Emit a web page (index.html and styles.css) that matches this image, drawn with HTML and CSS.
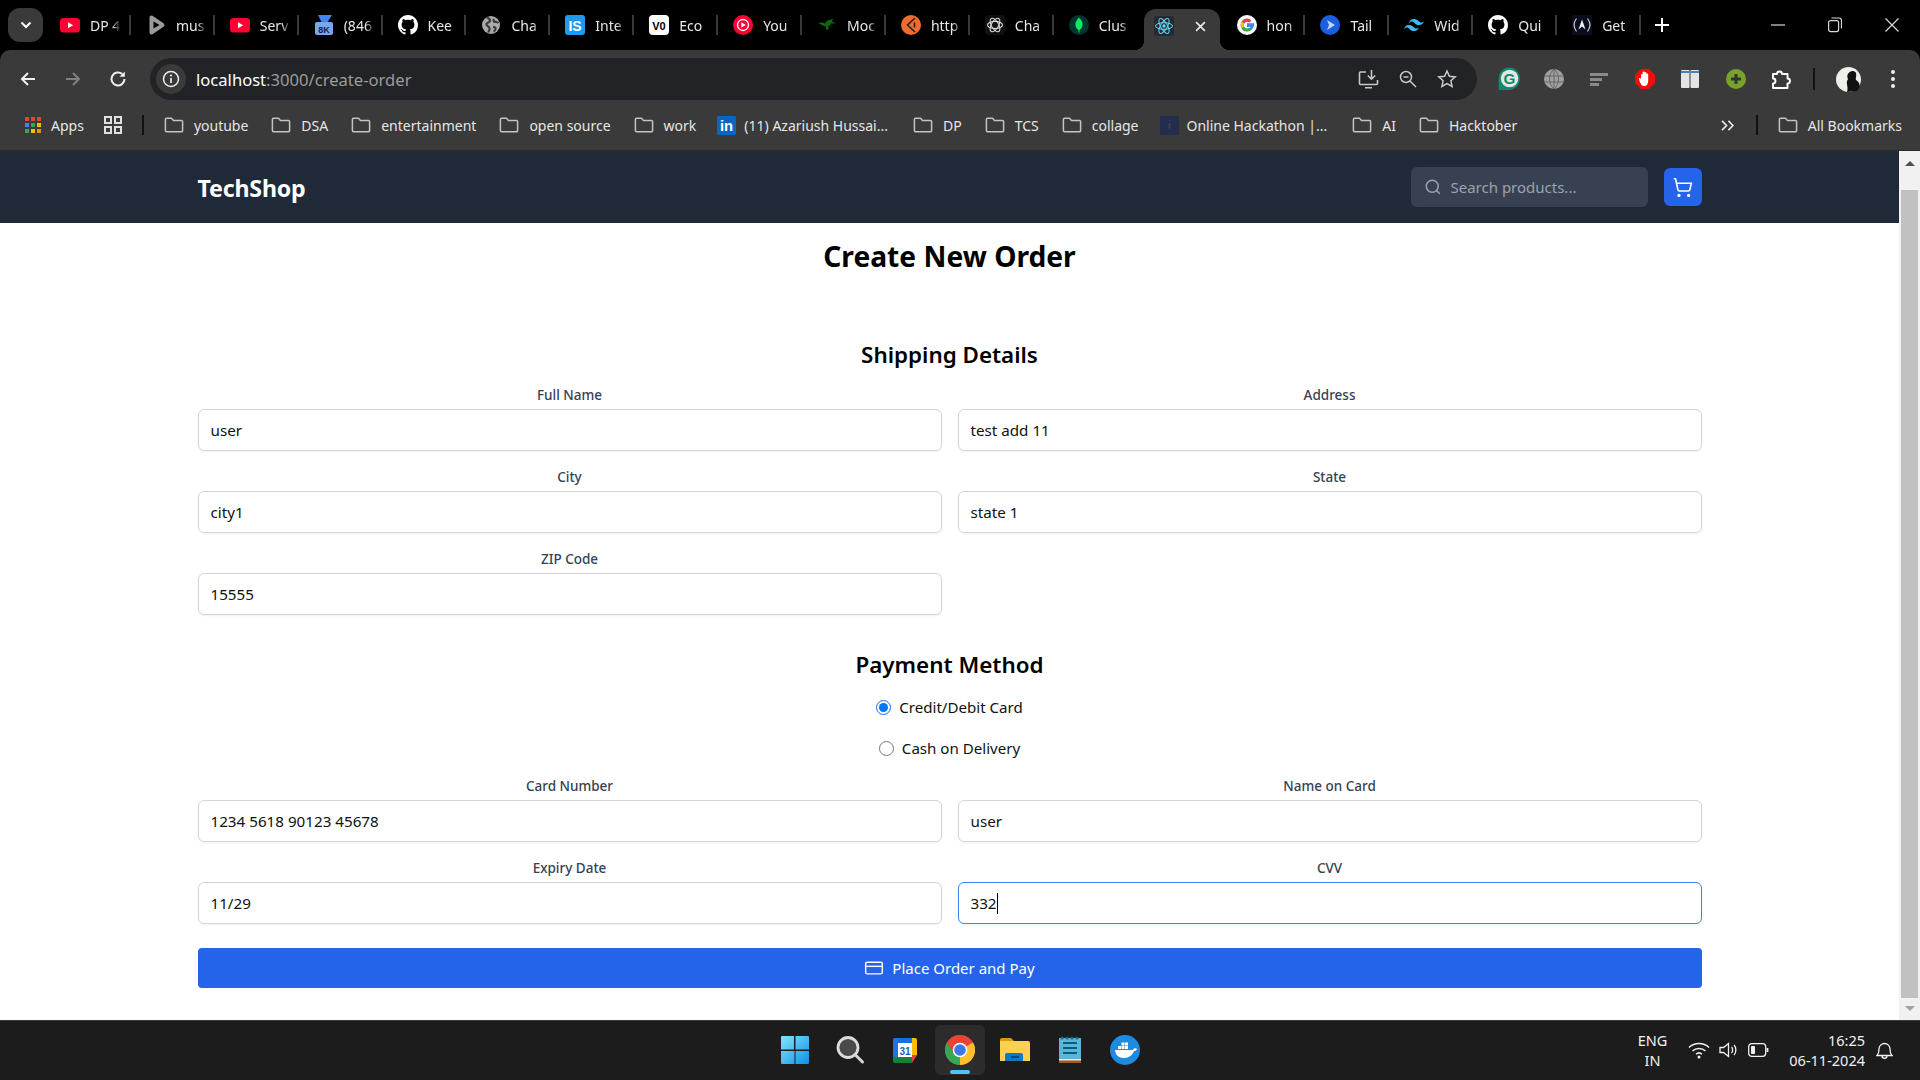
FILE: index.html
```html
<!DOCTYPE html>
<html lang="en">
<head>
<meta charset="utf-8">
<title>TechShop - Create Order</title>
<link rel="stylesheet" href="styles.css">
</head>
<body>
<svg class="defs" aria-hidden="true">
  <symbol id="folder" viewBox="0 0 20 20"><path d="M2.6 3.2h4.9l2 2.2h7.9a1.2 1.2 0 0 1 1.2 1.2v9a1.2 1.2 0 0 1-1.2 1.2H2.6a1.2 1.2 0 0 1-1.2-1.2V4.4a1.2 1.2 0 0 1 1.2-1.2z" fill="none" stroke="#c4c4c4" stroke-width="1.5"/></symbol>
  <symbol id="gh" viewBox="0 0 16 16"><path fill="#fff" d="M8 0C3.58 0 0 3.58 0 8c0 3.54 2.29 6.53 5.47 7.59.4.07.55-.17.55-.38 0-.19-.01-.82-.01-1.49-2.01.37-2.53-.49-2.69-.94-.09-.23-.48-.94-.82-1.13-.28-.15-.68-.52-.01-.53.63-.01 1.08.58 1.23.82.72 1.21 1.87.87 2.33.66.07-.52.28-.87.51-1.07-1.78-.2-3.64-.89-3.64-3.95 0-.87.31-1.59.82-2.15-.08-.2-.36-1.02.08-2.12 0 0 .67-.21 2.2.82.64-.18 1.32-.27 2-.27.68 0 1.36.09 2 .27 1.53-1.04 2.2-.82 2.2-.82.44 1.1.16 1.92.08 2.12.51.56.82 1.27.82 2.15 0 3.07-1.87 3.75-3.65 3.95.29.25.54.73.54 1.48 0 1.07-.01 1.93-.01 2.2 0 .21.15.46.55.38A8.013 8.013 0 0 0 16 8c0-4.42-3.58-8-8-8z"/></symbol>
  <symbol id="yt" viewBox="0 0 20 20"><rect y="3" width="20" height="14.5" rx="3.5" fill="#ff0033"/><path d="M8 7.2l5.2 3-5.2 3z" fill="#fff"/></symbol>
  <symbol id="globe" viewBox="0 0 20 20"><circle cx="10" cy="10" r="9" fill="#a9a9a9"/><path d="M6 2.5c2 1 3.5 1.5 3 3.5s-3 1-3.5 3 2.5 2 3 4-1 3-1 4.500M13 4c-1 2 0 3 2 3s2.500 1 2.500 1M12 12c1 0 3 0 2.500 2s-2 2.500-2 2.500" fill="none" stroke="#3a3a3a" stroke-width="2.200"/></symbol>
  <symbol id="chatgpt" viewBox="0 0 20 20"><rect width="20" height="20" rx="4" fill="#111"/><g fill="none" stroke="#d8d8d8" stroke-width="1.100"><ellipse cx="10" cy="10" rx="7.500" ry="3.600"/><ellipse cx="10" cy="10" rx="7.500" ry="3.600" transform="rotate(60 10 10)"/><ellipse cx="10" cy="10" rx="7.500" ry="3.600" transform="rotate(120 10 10)"/></g></symbol>
</svg>

<div class="tabstrip">
  <button class="expand" type="button" aria-label="Search tabs"><svg width="12" height="8" viewBox="0 0 12 8"><path d="M1.500 1.500L6 6l4.500-4.500" fill="none" stroke="#fff" stroke-width="2"/></svg></button>
  <div class="tab tab-first"><svg class="fav"><use href="#yt"/></svg><span class="tab-title">DP 4</span></div>
  <div class="tab"><svg class="fav" viewBox="0 0 20 20"><path d="M3.500 2.500a2 2 0 0 1 3-1.700l11 7.500a2 2 0 0 1 0 3.400l-11 7.500a2 2 0 0 1-3-1.700z" fill="#9a9a9a"/><path d="M7.500 6.500l6 3.500-6 3.500z" fill="#000"/></svg><span class="tab-title">mus</span></div>
  <div class="tab"><svg class="fav"><use href="#yt"/></svg><span class="tab-title">Serv</span></div>
  <div class="tab"><svg class="fav" viewBox="0 0 20 20"><path d="M4 0h14l-5 8H8z" fill="#3f86f0"/><rect x="1" y="7" width="18" height="13" rx="2" fill="#7aa7ec"/><text x="10" y="18" class="fav-8k">8K</text></svg><span class="tab-title">(846</span></div>
  <div class="tab"><svg class="fav"><use href="#gh"/></svg><span class="tab-title">Kee</span></div>
  <div class="tab"><svg class="fav"><use href="#globe"/></svg><span class="tab-title">Cha</span></div>
  <div class="tab"><svg class="fav" viewBox="0 0 20 20"><rect width="20" height="20" rx="3" fill="#1d9bf0"/><text x="10" y="15.500" class="fav-is">IS</text></svg><span class="tab-title">Inte</span></div>
  <div class="tab"><svg class="fav" viewBox="0 0 20 20"><rect width="20" height="20" rx="4" fill="#fff"/><text x="10" y="14.500" class="fav-v0">V0</text></svg><span class="tab-title">Eco</span></div>
  <div class="tab"><svg class="fav" viewBox="0 0 20 20"><circle cx="10" cy="10" r="10" fill="#ff0033"/><circle cx="10" cy="10" r="5.500" fill="none" stroke="#fff" stroke-width="1.300"/><path d="M8.300 7.300l4.500 2.700-4.500 2.700z" fill="#fff"/></svg><span class="tab-title">You</span></div>
  <div class="tab"><svg class="fav" viewBox="0 0 20 20"><path d="M1 8c3-1 5-.500 7 .500 1-2 3-4 5-3.500l3-1.500-1 3 4 2h-5c-1 2-2 3-3 3l1 3H9l0-3C6 11 4 9 1 8z" fill="#0a6b0a"/></svg><span class="tab-title">Moc</span></div>
  <div class="tab"><svg class="fav" viewBox="0 0 20 20"><circle cx="10" cy="10" r="10" fill="#ef6c2f"/><path d="M14 3L6.500 10l7.500 7M13.500 7.500v5" fill="none" stroke="#222" stroke-width="1.600"/></svg><span class="tab-title">http</span></div>
  <div class="tab"><svg class="fav"><use href="#chatgpt"/></svg><span class="tab-title">Cha</span></div>
  <div class="tab tab-last"><svg class="fav" viewBox="0 0 20 20"><circle cx="10" cy="10" r="10" fill="#023430"/><path d="M10 2.500c3 3 4 5.500 3.500 8-.4 2-1.500 3.500-3 4.500v2.500h-1V15c-1.500-1-2.600-2.500-3-4.500-.5-2.500.5-5 3.500-8z" fill="#00ed64"/></svg><span class="tab-title">Clus</span></div>
  <div class="tab tab-active"><svg class="fav" viewBox="0 0 20 20"><rect width="20" height="20" rx="3" fill="#262a2e"/><g fill="none" stroke="#61dafb" stroke-width="1"><ellipse cx="10" cy="10" rx="8.500" ry="3.300"/><ellipse cx="10" cy="10" rx="8.500" ry="3.300" transform="rotate(60 10 10)"/><ellipse cx="10" cy="10" rx="8.500" ry="3.300" transform="rotate(120 10 10)"/></g><circle cx="10" cy="10" r="1.700" fill="#61dafb"/></svg><svg class="tab-close" viewBox="0 0 10 10"><path d="M1 1l8 8M9 1L1 9" stroke="#e8e8e8" stroke-width="1.500"/></svg></div>
  <div class="tab"><svg class="fav" viewBox="0 0 20 20"><circle cx="10" cy="10" r="10" fill="#fff"/><path d="M10 8.300h7c.5 3-1.200 8-7 8a6.300 6.300 0 1 1 4.300-10.900l-2 2A3.500 3.500 0 1 0 13.500 12H10z" fill="#4285f4"/><path d="M4.600 6.500a6.300 6.300 0 0 1 9.700-1.100l-2 2a3.500 3.500 0 0 0-5.300.9z" fill="#ea4335"/><path d="M4.600 13.400a6.300 6.300 0 0 1 0-6.900L7 8.300a3.500 3.500 0 0 0 0 3.300z" fill="#fbbc05"/><path d="M4.600 13.400L7 11.600a3.500 3.500 0 0 0 5.200 1.100l2.300 1.900a6.300 6.300 0 0 1-9.900-1.200z" fill="#34a853"/></svg><span class="tab-title">hon</span></div>
  <div class="tab"><svg class="fav" viewBox="0 0 20 20"><circle cx="10" cy="10" r="10" fill="#1a5fe0"/><path d="M7 5l8 5-8 5 2-5z" fill="#bcd6ff"/></svg><span class="tab-title">Tail</span></div>
  <div class="tab"><svg class="fav" viewBox="0 0 20 20"><path d="M10 4c-2.700 0-4.300 1.300-5 4 1-1.300 2.200-1.800 3.500-1.500.8.200 1.300.8 2 1.400 1 1 2.200 2.100 4.500 2.100 2.700 0 4.300-1.300 5-4-1 1.300-2.200 1.800-3.500 1.500-.8-.2-1.300-.8-2-1.400C13.500 5.100 12.300 4 10 4zM5 10c-2.700 0-4.300 1.300-5 4 1-1.300 2.200-1.800 3.500-1.500.8.200 1.300.8 2 1.400 1 1 2.200 2.100 4.500 2.100 2.700 0 4.300-1.300 5-4-1 1.300-2.200 1.800-3.500 1.500-.8-.2-1.300-.8-2-1.400C8.500 11.100 7.300 10 5 10z" fill="#38bdf8"/></svg><span class="tab-title">Wid</span></div>
  <div class="tab"><svg class="fav"><use href="#gh"/></svg><span class="tab-title">Qui</span></div>
  <div class="tab"><svg class="fav" viewBox="0 0 20 20"><rect width="20" height="20" fill="#0b0d1f"/><path d="M4.500 3.500c-3 4-3 9 0 13M15.500 3.500c3 4 3 9 0 13" fill="none" stroke="#ccc" stroke-width="1.200"/><path d="M10 4.500l3.500 10-3.500-3-3.500 3z" fill="#f2f2f2"/></svg><span class="tab-title">Get</span></div>
  <button class="newtab" type="button" aria-label="New tab"><svg width="14" height="14" viewBox="0 0 14 14"><path d="M7 0v14M0 7h14" stroke="#fff" stroke-width="2"/></svg></button>
  <div class="winctl">
    <svg width="14" height="14" viewBox="0 0 14 14"><path d="M0 7h14" stroke="#d8d8d8" stroke-width="1.200"/></svg>
    <svg width="14" height="16" viewBox="0 0 14 16"><rect x=".6" y="3.600" width="10" height="11" rx="2" fill="none" stroke="#d8d8d8" stroke-width="1.200"/><path d="M3.500 1h7.500a2.500 2.500 0 0 1 2.500 2.500v8" fill="none" stroke="#d8d8d8" stroke-width="1.200"/></svg>
    <svg width="14" height="14" viewBox="0 0 14 14"><path d="M.5.500l13 13M13.500.500l-13 13" stroke="#d8d8d8" stroke-width="1.200"/></svg>
  </div>
</div>

<div class="chrome">
  <div class="toolbar">
    <svg class="nav-ic" viewBox="0 0 18 18"><path d="M16 9H3M9 3L3 9l6 6" fill="none" stroke="#f0f0f0" stroke-width="2"/></svg>
    <svg class="nav-ic" viewBox="0 0 18 18"><path d="M2 9h13M9 3l6 6-6 6" fill="none" stroke="#808080" stroke-width="2"/></svg>
    <svg class="nav-ic" viewBox="0 0 18 18"><path d="M15.500 9A6.500 6.500 0 1 1 13.300 4.100" fill="none" stroke="#f0f0f0" stroke-width="2"/><path d="M15.800 1.500v5.300h-5.300z" fill="#f0f0f0"/></svg>
    <div class="omnibox">
      <span class="site-info"><svg width="18" height="18" viewBox="0 0 18 18"><circle cx="9" cy="9" r="7.500" fill="none" stroke="#eee" stroke-width="1.500"/><path d="M9 8v5" stroke="#eee" stroke-width="1.700"/><circle cx="9" cy="5.500" r="1.100" fill="#eee"/></svg></span>
      <span class="url"><span class="url-host">localhost</span>:3000/create-order</span>
      <span class="omni-actions">
        <svg width="21" height="21" viewBox="0 0 21 21"><path d="M8 3H2.500a1 1 0 0 0-1 1v10.500a1 1 0 0 0 1 1h16a1 1 0 0 0 1-1V11M7 18.800h7" fill="none" stroke="#c8c8c8" stroke-width="1.600"/><path d="M13.500 1v9M9.800 6.500l3.700 3.700 3.700-3.700" fill="none" stroke="#c8c8c8" stroke-width="1.600"/></svg>
        <svg width="18" height="18" viewBox="0 0 18 18"><circle cx="7" cy="7" r="5.500" fill="none" stroke="#c8c8c8" stroke-width="1.500"/><path d="M11 11l6 6M4.500 7h5" stroke="#c8c8c8" stroke-width="1.500"/></svg>
        <svg width="20" height="20" viewBox="0 0 20 20"><path d="M10 2l2.400 5.300 5.800.6-4.300 3.900 1.200 5.700-5.100-2.900-5.100 2.900 1.200-5.700-4.300-3.900 5.800-.6z" fill="none" stroke="#c8c8c8" stroke-width="1.500"/></svg>
      </span>
    </div>
    <div class="extensions">
      <svg class="ext ext-grammarly" viewBox="0 0 20 22"><path d="M10 .5a9.800 9.800 0 0 1 10 10c0 6-4.500 10.500-10 10.500H.5V10.500A9.700 9.700 0 0 1 10 .5z" fill="#0e8a6d"/><circle cx="10.500" cy="10.500" r="8" fill="#e6e6e6"/><text x="10.500" y="15.500" class="ext-g">G</text></svg>
      <svg class="ext" viewBox="0 0 20 20"><circle cx="10" cy="10" r="10" fill="#a0a0a0"/><path d="M0 7h20M0 13h20M10 0v20M10 0c-6 5-6 15 0 20M10 0c6 5 6 15 0 20" fill="none" stroke="#5a5a5a" stroke-width=".8"/></svg>
      <svg class="ext" viewBox="0 0 20 20"><path d="M1 4h18v3H1zM1 9h12v3H1zM1 14h9v3H1z" fill="#8a8a8a"/></svg>
      <svg class="ext" viewBox="0 0 20 20"><path d="M6 0h8l6 6v8l-6 6H6l-6-6V6z" fill="#f20d0d"/><path d="M6 9V5.500a1 1 0 0 1 1.600 0V3.500a1 1 0 0 1 2 0v0a1 1 0 0 1 1.800 0V5a1 1 0 0 1 1.800 0v7c0 3-1.500 5-4 5s-3.500-2-4.700-5L4 10c-.2-1 1-1.500 2 0z" fill="#fff"/></svg>
      <svg class="ext" viewBox="0 0 20 20"><rect x="1" y="1" width="8.500" height="18" rx="1" fill="#e4e4e4"/><rect x="10.500" y="1" width="8.500" height="18" rx="1" fill="#e4e4e4"/><path d="M1 3h8.500M10.500 3h8.500" stroke="#4a7fc1" stroke-width="2"/></svg>
      <svg class="ext" viewBox="0 0 20 20"><circle cx="10" cy="10" r="10" fill="#76a32a"/><path d="M10 5v10M5 10h10" stroke="#333" stroke-width="3"/></svg>
      <svg class="ext" viewBox="0 0 20 20"><path d="M2 5h4a2.500 2.500 0 0 1 5 0h5.500v4.500a2.500 2.500 0 0 1 0 5V19H2v-4.500a2.500 2.500 0 0 0 0-5z" fill="none" stroke="#fff" stroke-width="1.900" stroke-linejoin="round"/></svg>
      <span class="tool-sep"></span>
      <svg class="avatar" viewBox="0 0 25 25"><circle cx="12.500" cy="12.500" r="12.500" fill="#f0eee8"/><path d="M11 25c2-6-2-8 1-13-3-6 5-11 8-6 1 3-1 5 0 7 4 2 5 7 1 11z" fill="#111"/></svg>
      <svg class="dots" viewBox="0 0 4 18"><circle cx="2" cy="2" r="2" fill="#eee"/><circle cx="2" cy="9" r="2" fill="#eee"/><circle cx="2" cy="16" r="2" fill="#eee"/></svg>
    </div>
  </div>
  <div class="bookmarks">
    <div class="bm bm-apps"><svg class="bm-ic" viewBox="0 0 17 17"><g fill="#e64335"><rect x="0" y="0" width="4" height="4"/><rect x="6" y="0" width="4" height="4"/></g><rect x="12" y="0" width="4" height="4" fill="#e64335"/><rect x="0" y="6" width="4" height="4" fill="#4285f4"/><rect x="6" y="6" width="4" height="4" fill="#34a853"/><rect x="12" y="6" width="4" height="4" fill="#fbbc05"/><rect x="0" y="12" width="4" height="4" fill="#34a853"/><rect x="6" y="12" width="4" height="4" fill="#fbbc05"/><rect x="12" y="12" width="4" height="4" fill="#ea8a1f"/></svg><span>Apps</span></div>
    <svg class="bm-grid" viewBox="0 0 18 18"><g fill="none" stroke="#e0e0e0" stroke-width="2"><rect x="1" y="1" width="6" height="6"/><rect x="11" y="1" width="6" height="6"/><rect x="1" y="11" width="6" height="6"/><rect x="11" y="11" width="6" height="6"/></g></svg>
    <span class="bm-sep"></span>
    <div class="bm"><svg class="bm-ic"><use href="#folder"/></svg><span>youtube</span></div>
    <div class="bm"><svg class="bm-ic"><use href="#folder"/></svg><span>DSA</span></div>
    <div class="bm"><svg class="bm-ic"><use href="#folder"/></svg><span>entertainment</span></div>
    <div class="bm"><svg class="bm-ic"><use href="#folder"/></svg><span>open source</span></div>
    <div class="bm"><svg class="bm-ic"><use href="#folder"/></svg><span>work</span></div>
    <div class="bm bm-tight"><svg class="bm-ic" viewBox="0 0 18 18"><rect width="18" height="18" rx="1.500" fill="#0a66c2"/><text x="9" y="14.500" class="fav-in">in</text></svg><span>(11) Azariush Hussai...</span></div>
    <div class="bm"><svg class="bm-ic"><use href="#folder"/></svg><span>DP</span></div>
    <div class="bm"><svg class="bm-ic"><use href="#folder"/></svg><span>TCS</span></div>
    <div class="bm"><svg class="bm-ic"><use href="#folder"/></svg><span>collage</span></div>
    <div class="bm bm-tight"><svg class="bm-ic" viewBox="0 0 20 20"><rect width="20" height="20" fill="#242e4c"/><path d="M10 4v1M10 7v7" stroke="#333e60" stroke-width="2"/></svg><span>Online Hackathon |...</span></div>
    <div class="bm"><svg class="bm-ic"><use href="#folder"/></svg><span>AI</span></div>
    <div class="bm"><svg class="bm-ic"><use href="#folder"/></svg><span>Hacktober</span></div>
    <div class="bm-end">
      <svg class="bm-more" viewBox="0 0 14 12"><path d="M1 1l5 5-5 5M8 1l5 5-5 5" fill="none" stroke="#eee" stroke-width="1.700"/></svg>
      <span class="bm-sep"></span>
      <div class="bm"><svg class="bm-ic"><use href="#folder"/></svg><span>All Bookmarks</span></div>
    </div>
  </div>
</div>

<div class="viewport">
  <div class="page">
    <header class="nav">
      <div class="nav-inner">
        <div class="brand">TechShop</div>
        <div class="nav-right">
          <div class="search">
            <svg width="18" height="18" viewBox="0 0 24 24" fill="none" stroke="#9ca3af" stroke-width="2"><circle cx="11" cy="11" r="8"/><path d="M21 21l-4.300-4.300"/></svg>
            <span>Search products...</span>
          </div>
          <button class="cart" type="button" aria-label="Cart"><svg width="21" height="21" viewBox="0 0 24 24" fill="none" stroke="#fff" stroke-width="1.800"><circle cx="8" cy="21" r="1"/><circle cx="19" cy="21" r="1"/><path d="M2.050 2.050h2l2.660 12.420a2 2 0 0 0 2 1.580h9.780a2 2 0 0 0 1.950-1.570l1.650-7.430H5.120"/></svg></button>
        </div>
      </div>
    </header>
    <main class="order">
      <h1 class="title">Create New Order</h1>
      <h2 class="section section-first">Shipping Details</h2>
      <div class="grid">
        <div class="field"><label class="label">Full Name</label><div class="input">user</div></div>
        <div class="field"><label class="label">Address</label><div class="input">test add 11</div></div>
        <div class="field"><label class="label">City</label><div class="input">city1</div></div>
        <div class="field"><label class="label">State</label><div class="input">state 1</div></div>
        <div class="field"><label class="label">ZIP Code</label><div class="input">15555</div></div>
      </div>
      <h2 class="section section-pay">Payment Method</h2>
      <div class="radios">
        <label class="radio"><input type="radio" name="pay" checked><span>Credit/Debit Card</span></label>
        <label class="radio"><input type="radio" name="pay"><span>Cash on Delivery</span></label>
      </div>
      <div class="grid">
        <div class="field"><label class="label">Card Number</label><div class="input">1234 5618 90123 45678</div></div>
        <div class="field"><label class="label">Name on Card</label><div class="input">user</div></div>
        <div class="field"><label class="label">Expiry Date</label><div class="input">11/29</div></div>
        <div class="field"><label class="label">CVV</label><div class="input input-focus">332<span class="caret"></span></div></div>
      </div>
      <button class="submit" type="button"><svg width="20" height="20" viewBox="0 0 24 24" fill="none" stroke="#fff" stroke-width="1.700"><rect x="2" y="5" width="20" height="14" rx="2"/><path d="M2 10h20"/></svg><span>Place Order and Pay</span></button>
    </main>
  </div>
  <div class="scrollbar">
    <div class="sb-btn sb-up"><span class="arrow-up"></span></div>
    <div class="sb-thumb"></div>
    <div class="sb-btn sb-down"><span class="arrow-down"></span></div>
  </div>
</div>

<footer class="taskbar">
  <div class="task-center">
    <span class="task"><svg width="30" height="30" viewBox="0 0 30 30"><defs><linearGradient id="win" x1="0" y1="0" x2="1" y2="1"><stop offset="0" stop-color="#7fe6fb"/><stop offset="1" stop-color="#0f8fe8"/></linearGradient></defs><path d="M1 2a1 1 0 0 1 1-1h12v13.500H1zM15.500 1H28a1 1 0 0 1 1 1v12.500H15.500zM1 16h13.500v13H2a1 1 0 0 1-1-1zM15.500 16H29v12a1 1 0 0 1-1 1H15.500z" fill="url(#win)"/></svg></span>
    <span class="task"><svg width="30" height="30" viewBox="0 0 30 30"><circle cx="13" cy="12.500" r="10" fill="#4a4a4a" stroke="#dcdcdc" stroke-width="2.800"/><path d="M20.500 20l7 7" stroke="#d8d8d8" stroke-width="3" stroke-linecap="round"/></svg></span>
    <span class="task"><svg width="30" height="30" viewBox="0 0 30 30"><path d="M5 3h18v6H5z" fill="#1a6fe0"/><path d="M3 5a2 2 0 0 1 2-2h3v20H3z" fill="#1f73e8"/><path d="M22 3h3a2 2 0 0 1 2 2v15h-5z" fill="#fbbc04"/><path d="M3 22h19v6H5a2 2 0 0 1-2-2z" fill="#188038"/><path d="M22 20h5l-5 8z" fill="#ea4335"/><rect x="8" y="8" width="14" height="14" fill="#fff"/><text x="15" y="19.500" class="cal-text">31</text></svg></span>
    <span class="task task-active"><svg width="30" height="30" viewBox="0 0 30 30"><circle cx="15" cy="15" r="15" fill="#ea4335"/><path d="M15 15L2 7.500A15 15 0 0 0 15 30z" fill="#34a853"/><path d="M15 15l0 15A15 15 0 0 0 28 7.500z" fill="#fbc02d"/><path d="M15 8h13A15 15 0 0 0 2 7.500l6.500 11z" fill="#ea4335"/><circle cx="15" cy="15" r="7.300" fill="#fff"/><circle cx="15" cy="15" r="5.800" fill="#3b78e7"/></svg><span class="task-bar"></span></span>
    <span class="task"><svg width="30" height="30" viewBox="0 0 30 30"><path d="M0 5a2 2 0 0 1 2-2h9l3 3h-14z" fill="#d69e0a"/><path d="M0 6h28a2 2 0 0 1 2 2v18H0z" fill="#fcd053"/><path d="M5 26v-6a2 2 0 0 1 2-2h14a2 2 0 0 1 2 2v6z" fill="#0f79c6"/><path d="M11 22h8" stroke="#063c6a" stroke-width="1.500"/></svg></span>
    <span class="task"><svg width="24" height="30" viewBox="0 0 24 30"><rect x="1" y="3" width="22" height="25" fill="#5ab5d6"/><rect x="1" y="25" width="22" height="3" fill="#9a5a2c"/><rect x="1" y="24" width="22" height="1.500" fill="#e6e6e6"/><path d="M5 8h14M5 13h14M5 18h14" stroke="#0d5a83" stroke-width="1.800"/><path d="M4 3h.100M9 3h.100M14 3h.100M19 3h.100" stroke="#0f6a94" stroke-width="3" stroke-linecap="round"/></svg></span>
    <span class="task"><svg width="30" height="30" viewBox="0 0 30 30"><circle cx="15" cy="15" r="15" fill="#1d8ce0"/><path d="M5 15h18c1-2 2.500-2 4-1-.5 1.500-2 2-3 2-1.500 4-5 7-10 7-5.500 0-8.500-3-9-8z" fill="#fff"/><g fill="#fff"><rect x="8" y="11" width="3" height="3"/><rect x="11.500" y="11" width="3" height="3"/><rect x="15" y="11" width="3" height="3"/><rect x="11.500" y="7.500" width="3" height="3"/><rect x="15" y="7.500" width="3" height="3"/></g></svg></span>
  </div>
  <div class="tray">
    <div class="lang"><span>ENG</span><span>IN</span></div>
    <svg class="tray-ic" width="22" height="18" viewBox="0 0 22 18"><path d="M1 6.500c5.500-5.300 14.500-5.300 20 0M4.500 10c3.500-3.400 9.500-3.400 13 0M8 13.300c1.700-1.600 4.300-1.600 6 0" fill="none" stroke="#f0f0f0" stroke-width="1.500"/><circle cx="11" cy="16" r="1.500" fill="#f0f0f0"/></svg>
    <svg class="tray-ic" width="20" height="18" viewBox="0 0 20 18"><path d="M1 6.500h3.500L9.500 2.500v13l-5-4H1z" fill="none" stroke="#f0f0f0" stroke-width="1.300"/><path d="M12.500 6c1.500 1.500 1.500 4.500 0 6M15 4c2.500 2.500 2.500 7.500 0 10" fill="none" stroke="#f0f0f0" stroke-width="1.300"/></svg>
    <svg class="tray-ic" width="21" height="14" viewBox="0 0 21 14"><rect x=".7" y=".7" width="17" height="12.600" rx="3" fill="none" stroke="#f0f0f0" stroke-width="1.300"/><rect x="3" y="3" width="4" height="8" rx="1" fill="#f0f0f0"/><path d="M19.500 5v4" stroke="#f0f0f0" stroke-width="1.800"/></svg>
    <div class="clock"><span>16:25</span><span>06-11-2024</span></div>
    <svg class="tray-bell" width="17" height="19" viewBox="0 0 17 19"><path d="M1 14.500c1.500-1.500 2-2.500 2-6.500a5.500 5.500 0 0 1 11 0c0 4 .5 5 2 6.500zM6 15c0 3 5 3 5 0" fill="none" stroke="#f0f0f0" stroke-width="1.300"/></svg>
  </div>
</footer>
</body>
</html>
```

FILE: styles.css
```css
* { box-sizing: border-box; }
html, body { margin: 0; padding: 0; }
body {
  width: 1920px;
  height: 1080px;
  overflow: hidden;
  display: flex;
  flex-direction: column;
  font-family: "Noto Sans", "Open Sans", sans-serif;
  background: #000;
}
button { border: 0; padding: 0; font: inherit; cursor: pointer; }
.defs { width: 0; height: 0; position: absolute; }

/* tab strip */
.tabstrip {
  height: 50px;
  flex: none;
  display: flex;
  align-items: center;
  background: #000;
  padding-left: 8px;
}
.expand {
  width: 35px;
  height: 34px;
  margin-right: 4px;
  border-radius: 12px;
  background: #3a3a3a;
  display: flex;
  align-items: center;
  justify-content: center;
}
.tab {
  flex: 0 0 83.9px;
  height: 20px;
  padding-left: 15px;
  display: flex;
  align-items: center;
  gap: 10px;
  border-right: 2px solid #3a3a3a;
}
.tab-first { padding-left: 13px; }
.tab-last { border-right: 0; }
.fav { width: 20px; height: 20px; flex: none; }
.tab-title {
  width: 31px;
  overflow: hidden;
  white-space: nowrap;
  font-size: 14px;
  color: #e8e8e8;
  -webkit-mask-image: linear-gradient(90deg, #000 70%, transparent 100%);
  mask-image: linear-gradient(90deg, #000 70%, transparent 100%);
}
.tab-active {
  flex-basis: 76px;
  margin: 0 2px 0 6px;
  align-self: flex-end;
  height: 41px;
  align-items: flex-start;
  padding-top: 7px;
  padding-left: 10px;
  background: #3a3a3a;
  border-right: 0;
  border-radius: 12px 12px 0 0;
  gap: 0;
  position: relative;
}
.tab-active::before, .tab-active::after {
  content: "";
  position: absolute;
  bottom: 0;
  width: 10px;
  height: 10px;
}
.tab-active::before { left: -10px; background: radial-gradient(circle at 0 0, transparent 10px, #3a3a3a 10.500px); }
.tab-active::after { right: -10px; background: radial-gradient(circle at 100% 0, transparent 10px, #3a3a3a 10.500px); }
.tab-close { width: 11px; height: 11px; margin: 5px 0 0 21px; }
.newtab {
  width: 14px;
  height: 14px;
  margin-left: 14px;
  background: none;
  display: flex;
}
.winctl {
  margin-left: auto;
  width: 128px;
  margin-right: 21px;
  display: flex;
  align-items: center;
  justify-content: space-between;
}

/* toolbar */
.chrome {
  flex: none;
  background: #3a3a3a;
  border-radius: 10px 10px 0 0;
  border-bottom: 1px solid #2a2a2a;
  height: 101px;
}
.toolbar {
  height: 58px;
  padding-left: 19px;
  display: flex;
  align-items: center;
}
.nav-ic { width: 18px; height: 18px; margin-right: 27px; flex: none; }
.nav-ic:nth-child(3) { margin-right: 23px; }
.omnibox {
  width: 1327px;
  height: 42px;
  background: #212327;
  border-radius: 21px;
  display: flex;
  align-items: center;
  padding-left: 6px;
  flex: none;
}
.site-info {
  width: 30px;
  height: 30px;
  border-radius: 50%;
  background: #3a3a3a;
  display: flex;
  align-items: center;
  justify-content: center;
}
.url {
  margin-left: 10px;
  font-size: 16.600px;
  color: #9b9b9b;
}
.url-host { color: #fff; }
.omni-actions {
  margin-left: auto;
  width: 99px;
  margin-right: 20px;
  display: flex;
  align-items: center;
  justify-content: space-between;
}
.extensions {
  display: flex;
  align-items: center;
  margin-left: 21px;
}
.ext { width: 20px; height: 20px; margin-right: 25.500px; flex: none; }
.ext-grammarly { width: 22px; height: 24px; margin-right: 23.500px; }
.tool-sep { width: 2px; height: 22px; background: #111; margin: 0 21px 0 -4px; }
.avatar { width: 25px; height: 25px; margin-right: 30px; }
.dots { width: 4px; height: 18px; }

/* bookmarks */
.bookmarks {
  height: 34px;
  padding: 0 18px 0 25px;
  display: flex;
  align-items: center;
  color: #e6e6e6;
  font-size: 14px;
}
.bm { display: flex; align-items: center; gap: 10px; margin-right: 23px; white-space: nowrap; }
.bm-ic { width: 20px; height: 20px; flex: none; }
.bm-apps { gap: 9px; margin-right: 20px; }
.bm-apps .bm-ic { width: 17px; height: 17px; }
.bm-tight { gap: 8px; margin-left: -2px; margin-right: 25px; }
.bm-tight .bm-ic { width: 19px; height: 19px; }
.bm-grid { width: 18px; height: 18px; flex: none; }
.bm-sep { width: 2px; height: 20px; background: #111; margin: 0 20px; flex: none; }
.bm-end { margin-left: auto; display: flex; align-items: center; }
.bm-end .bm { margin-right: 0; }
.bm-more { width: 13px; height: 11px; margin-right: 2px; }

/* viewport */
.viewport {
  flex: 1;
  min-height: 0;
  display: flex;
  background: #fff;
}
.page { flex: 1; min-width: 0; display: flex; flex-direction: column; }
.nav {
  height: 72px;
  flex: none;
  background: #1f2937;
  display: flex;
  justify-content: center;
}
.nav-inner {
  width: 1504px;
  display: flex;
  align-items: center;
  justify-content: space-between;
}
.brand { font-size: 23.200px; font-weight: 700; color: #fff; letter-spacing: -0.2px; padding-top: 1px; }
.nav-right { display: flex; align-items: center; gap: 16px; }
.search {
  width: 237px;
  height: 40px;
  border-radius: 6px;
  background: #374151;
  display: flex;
  align-items: center;
  gap: 9px;
  padding-left: 13px;
  color: #9ca3af;
  font-size: 15px;
}
.cart {
  width: 38px;
  height: 38px;
  border-radius: 6px;
  background: #2563eb;
  display: flex;
  align-items: center;
  justify-content: center;
}

/* form */
.order {
  width: 1504px;
  margin: 0 auto;
  color: #000;
}
.title {
  margin: 13px 0 0;
  font-size: 28.200px;
  line-height: 40px;
  font-weight: 700;
  text-align: center;
}
.section {
  margin: 0;
  font-size: 22.400px;
  line-height: 32px;
  font-weight: 600;
  text-align: center;
}
.section-first { margin: 63px 0 14px; }
.section-pay { margin: 34px 0 14px; }
.grid {
  display: grid;
  grid-template-columns: 1fr 1fr;
  gap: 16px;
}
.field { display: flex; flex-direction: column; }
.label {
  height: 19px;
  line-height: 21px;
  margin-bottom: 5px;
  text-align: center;
  font-size: 13.500px;
  font-weight: 500;
  color: #374151;
}
.input {
  height: 42px;
  border: 1px solid #d1d5db;
  border-radius: 6px;
  padding: 0 12px;
  display: flex;
  align-items: center;
  font-size: 15.200px;
  color: #111;
  box-shadow: 0 1px 2px rgba(0, 0, 0, .05);
}
.input-focus { border-color: #3b82f6; }
.caret { width: 1px; height: 21px; background: #000; }
.radios {
  display: flex;
  flex-direction: column;
  align-items: center;
  gap: 17px;
  margin-bottom: 16px;
}
.radio {
  height: 24px;
  display: flex;
  align-items: center;
  gap: 8px;
  font-size: 15.100px;
  color: #111;
}
.radio input { width: 15px; height: 15px; margin: 0; }
.submit {
  width: 100%;
  height: 40px;
  margin-top: 24px;
  background: #2563eb;
  border-radius: 4px;
  color: #fff;
  font-size: 15px;
  display: flex;
  align-items: center;
  justify-content: center;
  gap: 8px;
}

/* scrollbar */
.scrollbar {
  width: 21px;
  flex: none;
  background: #f1f1f1;
  display: flex;
  flex-direction: column;
  align-items: center;
}
.sb-btn { display: flex; justify-content: center; flex: none; }
.sb-up { height: 39px; padding-top: 10px; }
.sb-down { height: 22px; padding-top: 8px; }
.sb-thumb { flex: 1; width: 17px; background: #c1c1c1; }
.arrow-up, .arrow-down { width: 0; height: 0; border-left: 5px solid transparent; border-right: 5px solid transparent; }
.arrow-up { border-bottom: 5px solid #505050; }
.arrow-down { border-top: 5px solid #a3a3a3; }

/* taskbar */
.taskbar {
  height: 60px;
  flex: none;
  background: #1c1c1c;
  border-top: 1px solid #3a3a3a;
  display: flex;
  align-items: center;
  justify-content: space-between;
  color: #f2f2f2;
  font-size: 14.500px;
  padding: 0 0 1px 770px;
}
.task-center { display: flex; align-items: center; gap: 5px; }
.task {
  width: 50px;
  height: 50px;
  border-radius: 6px;
  display: flex;
  align-items: center;
  justify-content: center;
  position: relative;
}
.task-active { background: #2c2c2c; }
.task-bar {
  position: absolute;
  left: 15px;
  bottom: 1px;
  width: 20px;
  height: 4px;
  border-radius: 2px;
  background: #4cc2ff;
}
.tray { display: flex; align-items: center; padding-right: 27px; }
.lang { display: flex; flex-direction: column; align-items: center; line-height: 20px; margin-right: 21px; }
.tray-ic { margin-right: 9px; }
.clock { display: flex; flex-direction: column; align-items: flex-end; line-height: 20px; margin: 0 11px 0 11px; }
.fav-8k { font: 700 9px "Liberation Sans", sans-serif; fill: #10204a; text-anchor: middle; }
.fav-is { font: 700 14px "Liberation Sans", sans-serif; fill: #fff; text-anchor: middle; }
.fav-v0 { font: 700 11px "Liberation Sans", sans-serif; fill: #000; text-anchor: middle; }
.fav-in { font: 700 14px "Liberation Sans", sans-serif; fill: #fff; text-anchor: middle; }
.ext-g { font: 700 14px "Liberation Sans", sans-serif; fill: #0e8a6d; text-anchor: middle; }
.cal-text { font: 700 10px "Liberation Sans", sans-serif; fill: #1a5fc8; text-anchor: middle; }
```
